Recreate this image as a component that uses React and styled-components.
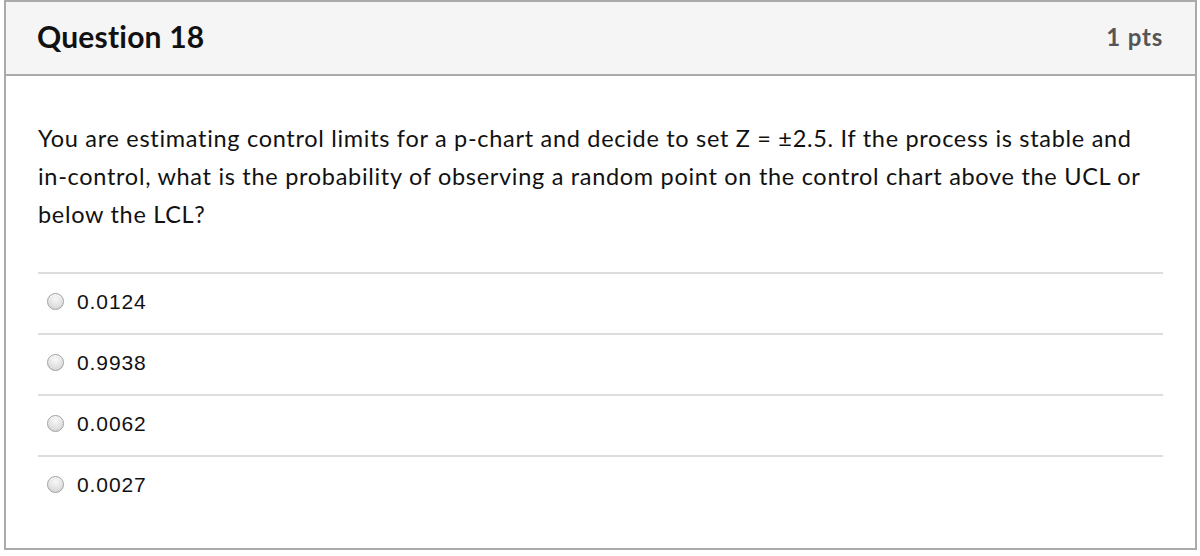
import React from 'react';
import styled, { createGlobalStyle } from 'styled-components';

const GlobalStyle = createGlobalStyle`
  html, body {
    margin: 0;
    padding: 0;
    background: #fff;
  }
`;

const Card = styled.div`
  box-sizing: border-box;
  margin: 0 3px 0 4px;
  width: 1193px;
  height: 550px;
  border: 2px solid #aaaaaa;
  display: flex;
  flex-direction: column;
  font-family: Lato, "Open Sans", sans-serif;
  font-variant-ligatures: none;
  color: #111;
`;

const Header = styled.div`
  box-sizing: border-box;
  height: 74px;
  background: #f5f5f5;
  border-bottom: 2px solid #aaaaaa;
  display: flex;
  align-items: center;
  justify-content: space-between;
  padding: 0 32px 4px 31px;
`;

const Title = styled.h2`
  margin: 0;
  font-size: 30px;
  letter-spacing: 0.2px;
  font-weight: 700;
  color: #111;
`;

const Points = styled.span`
  font-size: 24px;
  letter-spacing: 0.8px;
  font-weight: 700;
  color: #555;
`;

const Body = styled.div`
  padding: 43px 32px 0 32px;
`;

const Prompt = styled.p`
  margin: 0 0 39px 0;
  font-size: 23.5px;
  letter-spacing: 0.7px;
  line-height: 38px;
  color: #111;
`;

const Answers = styled.div`
  display: flex;
  flex-direction: column;
`;

const AnswerRow = styled.label`
  display: flex;
  align-items: center;
  box-sizing: border-box;
  height: 61px;
  border-top: 2px solid #dddddd;
  padding: 0 0 4px 9px;
`;

const Radio = styled.span`
  box-sizing: border-box;
  width: 17px;
  height: 17px;
  border-radius: 50%;
  border: 1px solid #a0a0a0;
  background: radial-gradient(circle at 50% 30%, #f8f8f8 0%, #e2e2e2 55%, #cfcfcf 100%);
  box-shadow: inset 0 1px 1px rgba(255, 255, 255, 0.8);
  margin-right: 13px;
  flex-shrink: 0;
`;

const AnswerText = styled.span`
  font-family: "Liberation Sans", Arial, sans-serif;
  font-size: 21px;
  letter-spacing: 0.9px;
  color: #111;
`;

const answers = ['0.0124', '0.9938', '0.0062', '0.0027'];

export default function App() {
  return (
    <>
      <GlobalStyle />
      <Card>
        <Header>
          <Title>Question 18</Title>
          <Points>1 pts</Points>
        </Header>
        <Body>
          <Prompt>
            You are estimating control limits for a p-chart and decide to set Z = ±2.5. If the process is stable and
            in-control, what is the probability of observing a random point on the control chart above the UCL or
            below the LCL?
          </Prompt>
          <Answers>
            {answers.map((a) => (
              <AnswerRow key={a}>
                <Radio />
                <AnswerText>{a}</AnswerText>
              </AnswerRow>
            ))}
          </Answers>
        </Body>
      </Card>
    </>
  );
}
